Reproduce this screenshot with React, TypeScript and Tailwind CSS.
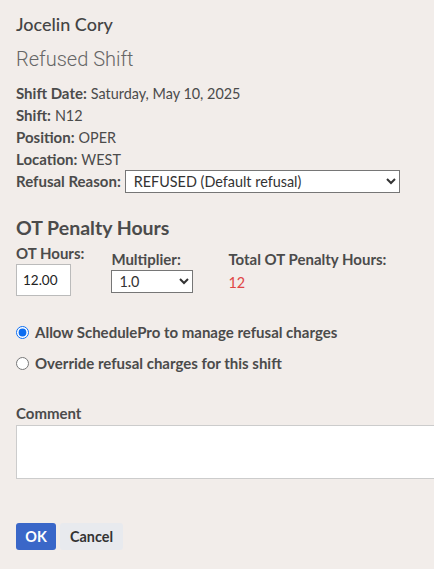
import React, { useState } from "react";

function InfoRow({ label, value }: { label: string; value: string }) {
  return (
    <div className="flex h-[22px] items-baseline gap-[4px] leading-[22px]">
      <span className="text-[15px] font-bold">{label}</span>
      <span>{value}</span>
    </div>
  );
}

export default function App() {
  const [mode, setMode] = useState("allow");

  return (
    <div
      className="min-h-screen w-[434px] overflow-hidden bg-[#f2edea] text-[#4b4b4b] text-[14.4px]"
      style={{ fontFamily: "Lato, 'Liberation Sans', sans-serif" }}
    >
      <div className="px-4 pt-[12px]">
        {/* Header */}
        <h1 className="text-[18px] leading-[24px] font-medium text-[#444]">Jocelin Cory</h1>
        <h2
          className="mt-[10px] text-[20px] leading-[26px] font-light text-[#666]"
          style={{ fontFamily: "Roboto, sans-serif" }}
        >
          Refused Shift
        </h2>

        {/* Shift details */}
        <div className="mt-[10px] flex flex-col">
          <InfoRow label="Shift Date:" value="Saturday, May 10, 2025" />
          <InfoRow label="Shift:" value="N12" />
          <InfoRow label="Position:" value="OPER" />
          <InfoRow label="Location:" value="WEST" />
          <div className="flex h-[23px] items-center gap-[4px]">
            <span className="text-[15px] font-bold">Refusal Reason:</span>
            <select className="h-[23px] w-[275px] border border-[#767676] bg-white px-[4px] text-[14.4px] text-[#333]">
              <option>REFUSED (Default refusal)</option>
            </select>
          </div>
        </div>

        {/* OT penalty */}
        <h3 className="mt-[23px] text-[19.5px] leading-[24px] font-bold text-[#4b4b4b]">OT Penalty Hours</h3>
        <div className="mt-[1px] flex items-start text-[15px]">
          <div className="mt-[2px] flex flex-col">
            <span className="font-bold leading-[20px]">OT Hours:</span>
            <input
              defaultValue="12.00"
              className="mt-[1px] h-[32px] w-[55px] border border-[#bbb] bg-white px-[6px] text-[13.5px] text-[#222]"
            />
          </div>
          <div className="ml-[27px] mt-[8px] flex flex-col">
            <span className="font-bold leading-[20px]">Multiplier:</span>
            <select className="mt-[1px] h-[23px] w-[82px] border border-[#767676] bg-white px-[3px] text-[14.4px] text-[#333]">
              <option>1.0</option>
            </select>
          </div>
          <div className="ml-[35px] mt-[8px] flex flex-col">
            <span className="font-bold leading-[20px]">Total OT Penalty Hours:</span>
            <span className="mt-[3px] text-[14.4px] text-[#e04646]">12</span>
          </div>
        </div>

        {/* Radios */}
        <div className="mt-[25px] flex flex-col gap-[9px] font-bold text-[15px]">
          <label className="flex h-[22px] items-center gap-[6px]">
            <input
              type="radio"
              checked={mode === "allow"}
              onChange={() => setMode("allow")}
              className="h-[13px] w-[13px] accent-[#0b6cf0]"
            />
            Allow SchedulePro to manage refusal charges
          </label>
          <label className="flex h-[22px] items-center gap-[6px]">
            <input
              type="radio"
              checked={mode === "override"}
              onChange={() => setMode("override")}
              className="h-[13px] w-[13px] accent-[#0b6cf0]"
            />
            Override refusal charges for this shift
          </label>
        </div>

        {/* Comment */}
        <div className="mt-[29px] font-bold leading-[20px] text-[15px]">Comment</div>
        <textarea className="mt-[2px] block h-[54px] w-[440px] resize-none border border-[#ccc] bg-white" />

        {/* Buttons */}
        <div className="mt-[44px] flex gap-[4px]">
          <button className="h-[27px] w-[40px] rounded-[3px] bg-[#3a67c8] font-bold text-white">OK</button>
          <button className="h-[27px] w-[63px] rounded-[3px] bg-[#e8eaee] font-bold text-[#333]">Cancel</button>
        </div>
      </div>
    </div>
  );
}
